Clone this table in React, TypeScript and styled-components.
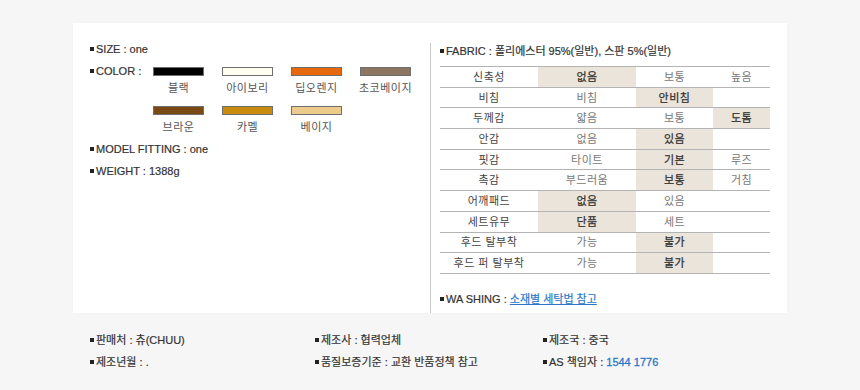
import styled, { createGlobalStyle } from "styled-components";

const GlobalStyle = createGlobalStyle`
  body {
    margin: 0;
    background: #f6f6f6;
    font-family: "Liberation Sans", "Noto Sans CJK KR", sans-serif;
    font-size: 11px;
    color: #333;
  }
`;

const swatches = [
  { name: "블랙", color: "#000000" },
  { name: "아이보리", color: "#fffdef" },
  { name: "딥오렌지", color: "#e8690d" },
  { name: "초코베이지", color: "#8d7660" },
  { name: "브라운", color: "#7a4a15" },
  { name: "카멜", color: "#c98b0e" },
  { name: "베이지", color: "#eccb8c" },
];

// hl = index of the highlighted cell (0..2 among values)
const fabricRows: { label: string; values: string[]; hl: number }[] = [
  { label: "신축성", values: ["없음", "보통", "높음"], hl: 0 },
  { label: "비침", values: ["비침", "안비침", ""], hl: 1 },
  { label: "두께감", values: ["얇음", "보통", "도톰"], hl: 2 },
  { label: "안감", values: ["없음", "있음", ""], hl: 1 },
  { label: "핏감", values: ["타이트", "기본", "루즈"], hl: 1 },
  { label: "촉감", values: ["부드러움", "보통", "거침"], hl: 1 },
  { label: "어깨패드", values: ["없음", "있음", ""], hl: 0 },
  { label: "세트유무", values: ["단품", "세트", ""], hl: 0 },
  { label: "후드 탈부착", values: ["가능", "불가", ""], hl: 1 },
  { label: "후드 퍼 탈부착", values: ["가능", "불가", ""], hl: 1 },
];

const footer = [
  [
    { label: "판매처", value: "츄(CHUU)" },
    { label: "제조사", value: "협력업체" },
    { label: "제조국", value: "중국" },
  ],
  [
    { label: "제조년월", value: "." },
    { label: "품질보증기준", value: "교환 반품정책 참고" },
    { label: "AS 책임자", value: "1544 1776", blue: true },
  ],
];

const Bullet = () => <Square />;

export default function App() {
  return (
    <>
      <GlobalStyle />
      <Page>
        <Panel>
          <LeftCol>
            <InfoLine>
              <Bullet />
              SIZE : one
            </InfoLine>
            <ColorRow>
              <InfoLine>
                <Bullet />
                COLOR :
              </InfoLine>
              <SwatchGrid>
                {swatches.map((s) => (
                  <SwatchItem key={s.name}>
                    <Swatch color={s.color} />
                    <SwatchName>{s.name}</SwatchName>
                  </SwatchItem>
                ))}
              </SwatchGrid>
            </ColorRow>
            <InfoLine>
              <Bullet />
              MODEL FITTING : one
            </InfoLine>
            <InfoLine>
              <Bullet />
              WEIGHT : 1388g
            </InfoLine>
          </LeftCol>
          <RightCol>
            <InfoLine>
              <Bullet />
              FABRIC : 폴리에스터 95%(일반), 스판 5%(일반)
            </InfoLine>
            <FabricTable>
              <colgroup>
                <col style={{ width: 98 }} />
                <col style={{ width: 98 }} />
                <col style={{ width: 77 }} />
                <col style={{ width: 57 }} />
              </colgroup>
              <tbody>
                {fabricRows.map((r) => (
                  <tr key={r.label}>
                    <Cell>{r.label}</Cell>
                    {r.values.map((v, i) => (
                      <Cell key={i} $hl={i === r.hl}>
                        {v}
                      </Cell>
                    ))}
                  </tr>
                ))}
              </tbody>
            </FabricTable>
            <WashLine>
              <Bullet />
              WA SHING : <WashLink href="#">소재별 세탁법 참고</WashLink>
            </WashLine>
          </RightCol>
        </Panel>
        <Footer>
          {footer.map((row, ri) => (
            <FooterRow key={ri}>
              {row.map((f) => (
                <FooterItem key={f.label}>
                  <Bullet />
                  {f.label} : {f.blue ? <Blue>{f.value}</Blue> : f.value}
                </FooterItem>
              ))}
            </FooterRow>
          ))}
        </Footer>
      </Page>
    </>
  );
}

const Page = styled.div`
  padding: 23px 73px 0 73px;
  width: 714px;
`;

const Panel = styled.div`
  display: flex;
  background: #fff;
  height: 290px;
  box-shadow: 0 0 3px rgba(0, 0, 0, 0.04);
`;

const Square = styled.span`
  display: inline-block;
  width: 4px;
  height: 4px;
  background: #222;
  margin-right: 2px;
  vertical-align: 2px;
`;

const InfoLine = styled.div`
  line-height: 14px;
  color: #333;
  white-space: nowrap;
  -webkit-text-stroke: 0.2px #333;
`;

const LeftCol = styled.div`
  width: 340px;
  padding: 19px 0 0 17px;
  display: flex;
  flex-direction: column;
  gap: 8px;
`;

const ColorRow = styled.div`
  display: flex;
  > ${InfoLine} {
    width: 63px;
  }
`;

const SwatchGrid = styled.div`
  display: grid;
  grid-template-columns: repeat(4, 69px);
  row-gap: 11px;
  padding-top: 3px;
`;

const SwatchItem = styled.div`
  width: 51px;
  display: flex;
  flex-direction: column;
  align-items: center;
  gap: 5px;
`;

const Swatch = styled.div<{ color: string }>`
  box-sizing: border-box;
  width: 51px;
  height: 9px;
  background: ${(p) => p.color};
  border: 1px solid #6f6f6f;
`;

const SwatchName = styled.div`
  line-height: 14px;
  color: #555;
  white-space: nowrap;
  letter-spacing: 0.5px;
`;

const RightCol = styled.div`
  margin-top: 20px;
  border-left: 1px solid #c8c8c8;
  padding: 1px 0 0 9px;
  width: 330px;
`;

const FabricTable = styled.table`
  margin-top: 8px;
  width: 330px;
  border-collapse: collapse;
  table-layout: fixed;
  border-top: 1px solid #b3b3b3;
`;

const Cell = styled.td<{ $hl?: boolean }>`
  height: 19.7px;
  padding: 0;
  text-align: center;
  border-bottom: 1px solid #b3b3b3;
  background: ${(p) => (p.$hl ? "#ebe4da" : "transparent")};
  color: ${(p) => (p.$hl ? "#333" : "#777")};
  -webkit-text-stroke: ${(p) => (p.$hl ? "0.25px #333" : "0")};
  line-height: 14px;
  letter-spacing: 0.5px;
  &:first-child {
    color: #444;
  }
`;

const WashLine = styled(InfoLine)`
  margin-top: 18px;
`;

const WashLink = styled.a`
  color: #2a77c9;
  text-decoration: underline;
  -webkit-text-stroke: 0.2px #2a77c9;
`;

const Footer = styled.div`
  padding: 20px 0 0 17px;
  display: flex;
  flex-direction: column;
  gap: 8px;
`;

const FooterRow = styled.div`
  display: grid;
  grid-template-columns: 225px 228px 200px;
`;

const FooterItem = styled(InfoLine)``;

const Blue = styled.span`
  color: #2a77c9;
  -webkit-text-stroke: 0.3px #2a77c9;
`;
